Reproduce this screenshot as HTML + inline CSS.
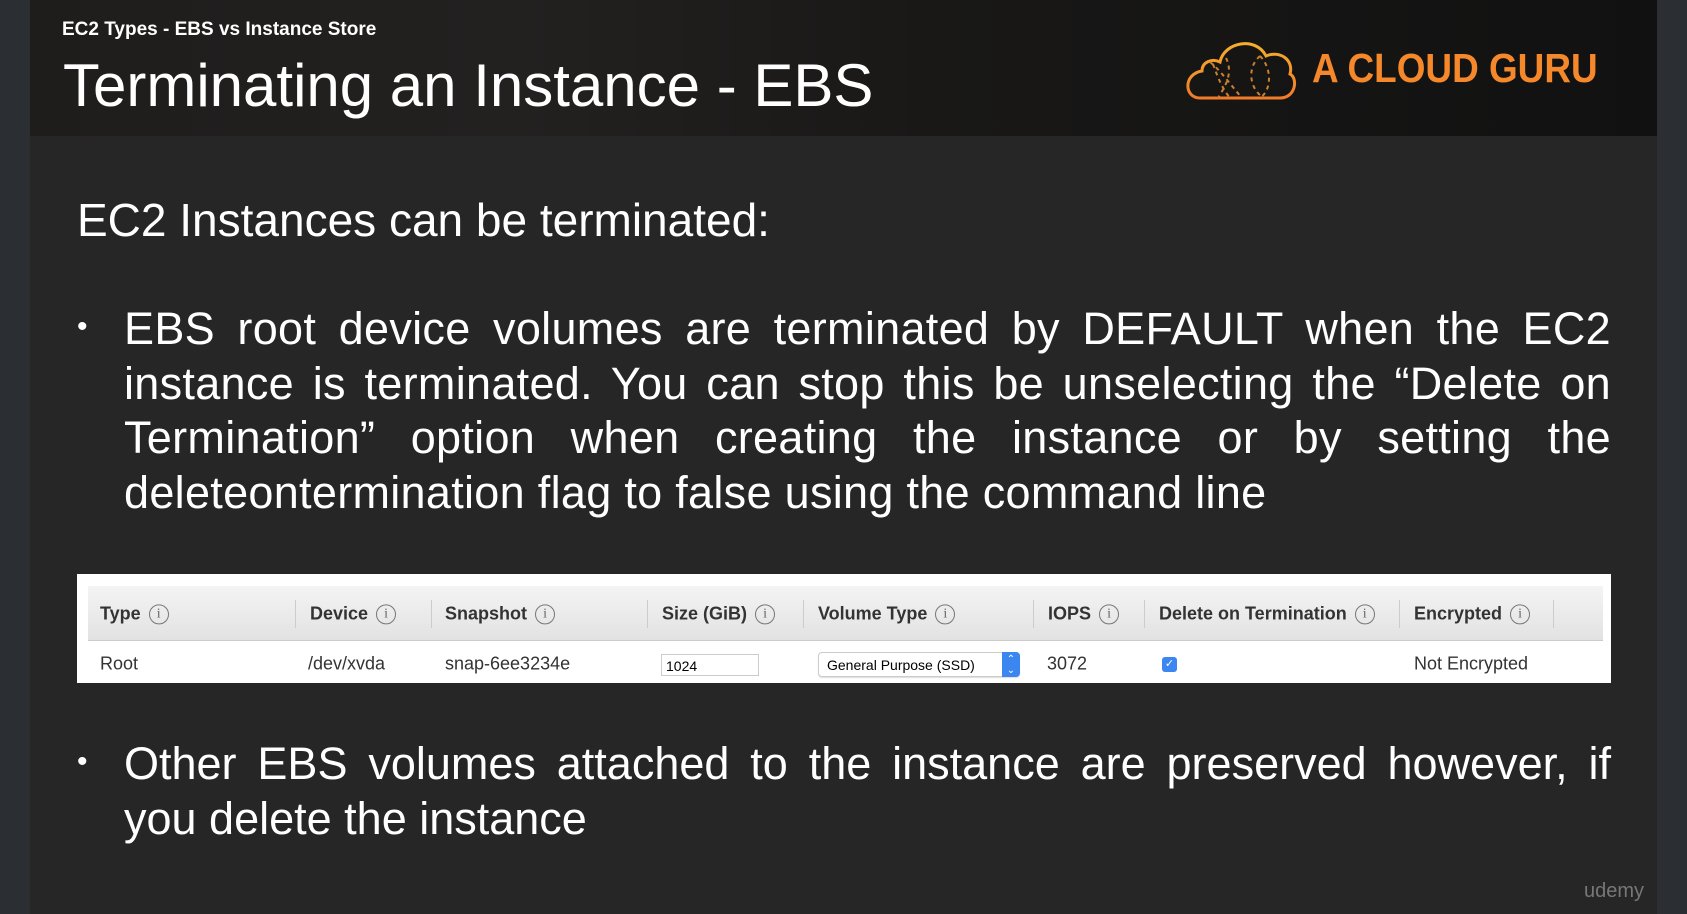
<!DOCTYPE html>
<html><head><meta charset="utf-8"><style>
*{margin:0;padding:0;box-sizing:border-box}
body{width:1687px;height:914px;background:#2b2e33;position:relative;overflow:hidden;font-family:"Liberation Sans",sans-serif}
#slide{position:absolute;left:30px;top:0;width:1627px;height:914px;background:#262626}
#hdr{position:absolute;left:30px;top:0;width:1627px;height:136px;background:linear-gradient(90deg,#1e1d1c 0%,#232120 30%,#191817 55%,#111 100%)}
.t{position:absolute;color:#fff;white-space:nowrap}
.p{position:absolute;left:124px;width:1487px;color:#fff;font-size:45px;line-height:54.5px;text-align:justify;text-align-last:left}
.dot{position:absolute;left:77px;color:#fff;font-size:30px}
#tbl{position:absolute;left:77px;top:574px;width:1534px;height:109px;background:#fff}
#th{position:absolute;left:11px;top:12px;width:1515px;height:55px;background:linear-gradient(#f4f4f4,#e2e2e2);border-bottom:1px solid #ccc}
.h{position:absolute;top:28px;font-size:18px;font-weight:bold;color:#333;transform:translateY(-50%);white-space:nowrap}
.i{display:inline-block;width:20px;height:20px;border:1.5px solid #777;border-radius:50%;font-size:14px;font-weight:normal;text-align:center;line-height:17px;color:#666;margin-left:8px;vertical-align:middle;font-family:"Liberation Serif",serif}
.sep{position:absolute;top:14px;width:1px;height:28px;background:#ccc}
.c{position:absolute;top:90px;font-size:18px;color:#333;transform:translateY(-50%);white-space:nowrap}
</style></head><body>
<div id="slide"></div>
<div id="hdr"></div>
<div class="t" style="left:62px;top:19px;font-size:19px;font-weight:bold">EC2 Types - EBS vs Instance Store</div>
<div class="t" style="left:63px;top:51px;font-size:60px">Terminating an Instance - EBS</div>
<svg style="position:absolute;left:1180px;top:34px" width="120" height="70" viewBox="0 0 120 70">
<defs><linearGradient id="g" x1="0" y1="0" x2="0" y2="1"><stop offset="0" stop-color="#f4b02a"/><stop offset="1" stop-color="#f07b2a"/></linearGradient></defs>
<path d="M20 64 C4 64 3 40 22 37 C22 28 32 24 40 28 C44 8 76 2 86 22 C100 16 114 26 110 40 C118 44 116 64 100 64 Z" fill="none" stroke="url(#g)" stroke-width="3"/>
<g fill="none" stroke="#c9812e" stroke-width="2" stroke-dasharray="4 4">
<path d="M30 28 C40 36 50 50 62 64"/><path d="M46 24 C54 40 44 54 38 64"/><path d="M33 30 C38 44 42 54 50 64"/>
<path d="M80 22 C66 34 70 56 84 64"/><path d="M80 22 C92 34 92 56 80 64"/></g>
</svg>
<div class="t" style="left:1312px;top:45px;font-size:41px;font-weight:bold;color:#f5882a;transform:scaleX(0.9);transform-origin:left">A CLOUD GURU</div>
<div class="t" style="left:77px;top:193px;font-size:46px">EC2 Instances can be terminated:</div>
<div class="dot" style="top:310px">•</div>
<div class="p" style="top:302px;letter-spacing:0.3px">EBS root device volumes are terminated by DEFAULT when the EC2 instance is terminated. You can stop this be unselecting the “Delete on Termination” option when creating the instance or by setting the deleteontermination flag to false using the command line</div>
<div id="tbl">
<div id="th"></div>
<div class="h" style="left:23px;top:40px">Type<span class="i">i</span></div>
<div class="sep" style="left:218px;top:26px"></div>
<div class="h" style="left:233px;top:40px">Device<span class="i">i</span></div>
<div class="sep" style="left:354px;top:26px"></div>
<div class="h" style="left:368px;top:40px">Snapshot<span class="i">i</span></div>
<div class="sep" style="left:570px;top:26px"></div>
<div class="h" style="left:585px;top:40px">Size (GiB)<span class="i">i</span></div>
<div class="sep" style="left:726px;top:26px"></div>
<div class="h" style="left:741px;top:40px">Volume Type<span class="i">i</span></div>
<div class="sep" style="left:956px;top:26px"></div>
<div class="h" style="left:971px;top:40px">IOPS<span class="i">i</span></div>
<div class="sep" style="left:1067px;top:26px"></div>
<div class="h" style="left:1082px;top:40px">Delete on Termination<span class="i">i</span></div>
<div class="sep" style="left:1322px;top:26px"></div>
<div class="h" style="left:1337px;top:40px">Encrypted<span class="i">i</span></div>
<div class="sep" style="left:1476px;top:26px"></div>
<div class="c" style="left:23px">Root</div>
<div class="c" style="left:231px">/dev/xvda</div>
<div class="c" style="left:368px">snap-6ee3234e</div>
<div style="position:absolute;left:584px;top:80px;width:98px;height:22px;border:1px solid #ccc;font-size:14px;padding:3px 4px;color:#000">1024</div>
<div style="position:absolute;left:741px;top:78px;width:202px;height:25px;border:1px solid #ccc;border-radius:4px;font-size:14px;padding:4px 8px;color:#000;box-shadow:0 1px 1px #ddd">General Purpose (SSD)<div style="position:absolute;right:-1px;top:-1px;width:18px;height:25px;background:#3b86f0;border-radius:0 4px 4px 0;color:#fff;font-size:10px;text-align:center;line-height:11px;padding-top:2px">&#8963;<br>&#8964;</div></div>
<div class="c" style="left:970px">3072</div>
<div style="position:absolute;left:1085px;top:83px;width:15px;height:15px;background:#3b86f0;border-radius:3px;color:#fff;font-size:11px;text-align:center;line-height:15px">✓</div>
<div class="c" style="left:1337px">Not Encrypted</div>
</div>
<div class="dot" style="top:745px">•</div>
<div class="p" style="top:737px">Other EBS volumes attached to the instance are preserved however, if you delete the instance</div>
<div class="t" style="left:1584px;top:880px;font-size:20px;color:#777">udemy</div>
</body></html>
